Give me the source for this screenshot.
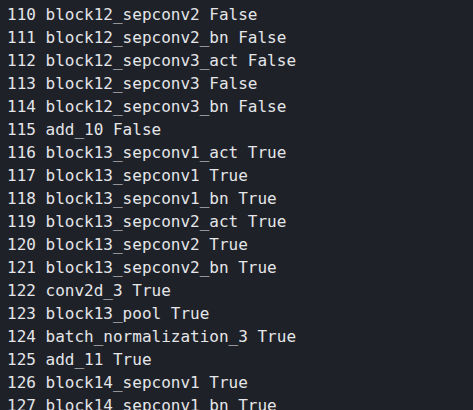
const rows: [number, string, boolean][] = [
  [110, 'block12_sepconv2', false],
  [111, 'block12_sepconv2_bn', false],
  [112, 'block12_sepconv3_act', false],
  [113, 'block12_sepconv3', false],
  [114, 'block12_sepconv3_bn', false],
  [115, 'add_10', false],
  [116, 'block13_sepconv1_act', true],
  [117, 'block13_sepconv1', true],
  [118, 'block13_sepconv1_bn', true],
  [119, 'block13_sepconv2_act', true],
  [120, 'block13_sepconv2', true],
  [121, 'block13_sepconv2_bn', true],
  [122, 'conv2d_3', true],
  [123, 'block13_pool', true],
  [124, 'batch_normalization_3', true],
  [125, 'add_11', true],
  [126, 'block14_sepconv1', true],
  [127, 'block14_sepconv1_bn', true],
];

export default function App() {
  return (
    <div className="w-[473px] h-[410px] overflow-hidden bg-[#1f2128] pl-[7px] pt-[3px]">
      <pre className="font-['DejaVu_Sans_Mono',monospace] text-[16px] leading-[23px] text-[#e4e6e9]">
        {rows.map(([i, name, t]) => (
          <div key={i}>
            {i} {name} {t ? 'True' : 'False'}
          </div>
        ))}
      </pre>
    </div>
  );
}
